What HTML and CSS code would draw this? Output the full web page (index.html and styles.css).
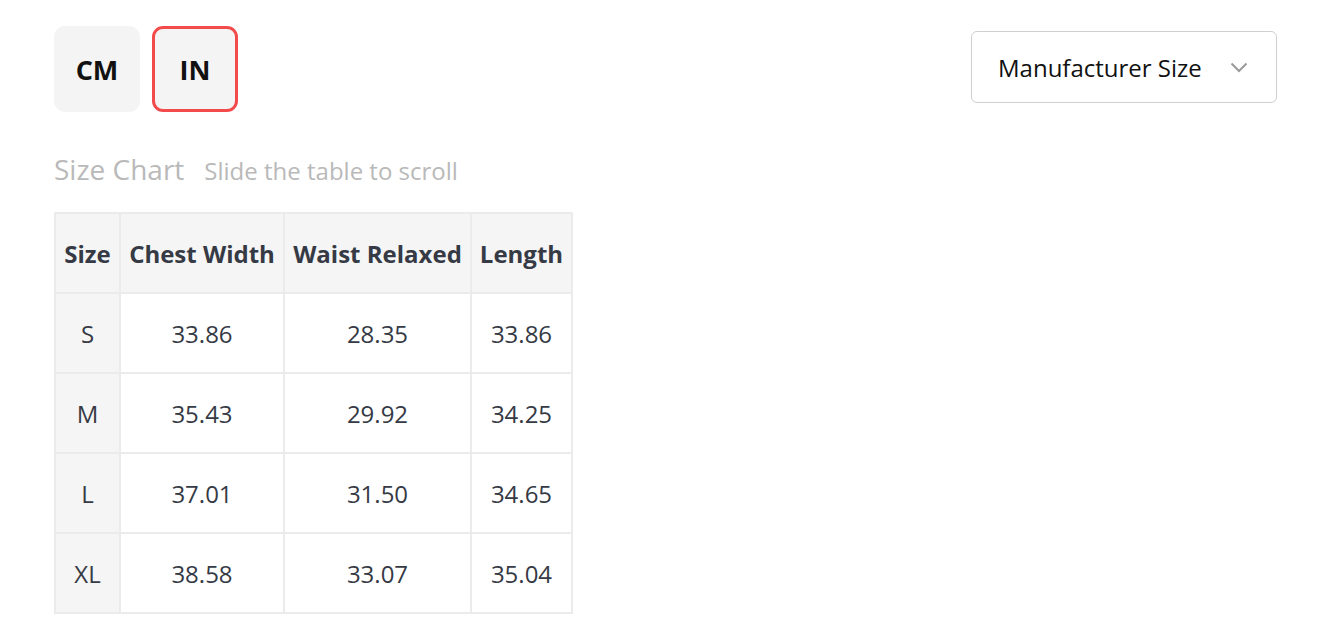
FILE: index.html
```html
<!DOCTYPE html>
<html lang="en">
<head>
<meta charset="utf-8">
<title>Size Chart</title>
<link rel="stylesheet" href="styles.css">
</head>
<body>
<div class="page">
  <div class="top">
    <div class="units">
      <button class="unit">CM</button>
      <button class="unit active">IN</button>
    </div>
    <div class="select">
      <span class="select-label">Manufacturer Size</span>
      <svg class="chev" width="18" height="11" viewBox="0 0 18 11"><path d="M1.5 1.5 L9 9 L16.5 1.5" fill="none" stroke="#9a9a9a" stroke-width="2"/></svg>
    </div>
  </div>
  <div class="caption">
    <span class="title">Size Chart</span>
    <span class="hint">Slide the table to scroll</span>
  </div>
  <table class="chart">
    <colgroup>
      <col class="c1"><col class="c2"><col class="c3"><col class="c4">
    </colgroup>
    <thead>
      <tr><th>Size</th><th>Chest Width</th><th>Waist Relaxed</th><th>Length</th></tr>
    </thead>
    <tbody>
      <tr><th>S</th><td>33.86</td><td>28.35</td><td>33.86</td></tr>
      <tr><th>M</th><td>35.43</td><td>29.92</td><td>34.25</td></tr>
      <tr><th>L</th><td>37.01</td><td>31.50</td><td>34.65</td></tr>
      <tr><th>XL</th><td>38.58</td><td>33.07</td><td>35.04</td></tr>
    </tbody>
  </table>
</div>
</body>
</html>
```
FILE: styles.css
```css
* { box-sizing: border-box; }
body {
  margin: 0;
  background: #fff;
  font-family: "Open Sans", "Liberation Sans", sans-serif;
  color: #353a45;
}
.page {
  padding: 26px 51px 0 54px;
}
.top {
  display: flex;
  justify-content: space-between;
  align-items: flex-start;
}
.units {
  display: flex;
  gap: 12px;
}
.unit {
  width: 86px;
  height: 86px;
  border: 3px solid transparent;
  border-radius: 11px;
  background: #f4f4f4;
  font-family: "Open Sans", "Liberation Sans", sans-serif;
  font-weight: 700;
  font-size: 27px;
  color: #111;
  padding: 0;
}
.unit.active {
  border-color: #f34a4c;
}
.select {
  margin-top: 5px;
  width: 306px;
  height: 72px;
  border: 1.5px solid #cfcfcf;
  border-radius: 6px;
  display: flex;
  align-items: center;
  justify-content: space-between;
  padding: 0 28px 0 26px;
}
.select-label {
  font-size: 24px;
  color: #111;
}
.caption {
  margin-top: 38px;
  display: flex;
  align-items: baseline;
  gap: 20px;
  color: #b9b9b9;
}
.title {
  font-size: 28px;
}
.hint {
  font-size: 24px;
}
.chart {
  margin-top: 24px;
  border-collapse: collapse;
  table-layout: fixed;
  width: 517px;
}
.c1 { width: 65px; }
.c2 { width: 164px; }
.c3 { width: 187px; }
.c4 { width: 101px; }
.chart th, .chart td {
  border: 2px solid #ebebeb;
  height: 80px;
  padding: 0;
  text-align: center;
  font-size: 24px;
  white-space: nowrap;
}
.chart thead th {
  background: #f5f5f5;
  font-weight: 700;
}
.chart tbody th {
  background: #f5f5f5;
  font-weight: 400;
}
.chart td {
  background: #fff;
}
```
